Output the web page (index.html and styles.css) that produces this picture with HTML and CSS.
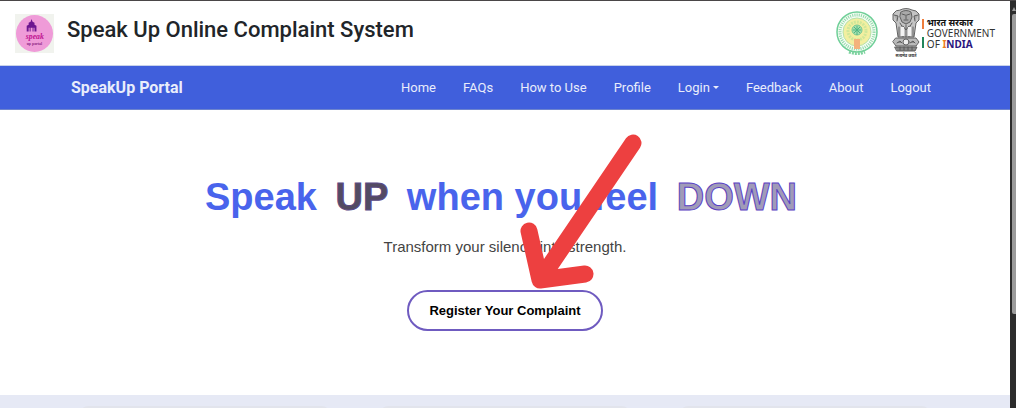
FILE: index.html
```html
<!DOCTYPE html>
<html lang="en">
<head>
<meta charset="utf-8">
<title>Speak Up Online Complaint System</title>
<link rel="stylesheet" href="styles.css">
</head>
<body>
<div class="window">
  <div class="page">
    <header class="masthead">
      <svg class="logo" viewBox="0 0 40 40" role="img" aria-label="Speak Up">
        <rect width="40" height="40" fill="#f1f3ee"/>
        <circle cx="20" cy="20" r="19" fill="#ef9bd8"/>
        <path d="M12 18v-6l2-1v-2l2-1 1-3 1 3 2 1v2l2 1v6h-2v-4h-1v4h-1v-4h-2v4h-1v-4h-1v4z" fill="#6d1590"/>
        <text x="11" y="26" class="logo-word">speak</text>
        <text x="12" y="32" class="logo-sub">up portal</text>
      </svg>
      <h1 class="title">Speak Up Online Complaint System</h1>
      <div class="emblems">
        <svg class="seal" viewBox="0 0 42 46" role="img" aria-label="State seal">
          <circle cx="21" cy="22" r="20" fill="#f4fcf2" stroke="#6fcf98" stroke-width="1.5"/>
          <circle cx="21" cy="22" r="17" fill="none" stroke="#8fd8ab" stroke-width="3" stroke-dasharray="1 1.2"/>
          <circle cx="21" cy="22" r="14" fill="#f3efa0" stroke="#b5e2ac"/>
          <circle cx="21" cy="21" r="9" fill="none" stroke="#cfe79a" stroke-width="3" stroke-dasharray="2 1"/>
          <circle cx="21" cy="20" r="5" fill="#a6dfae" stroke="#74c992"/>
          <path d="M21 16v9M17 20h8M18 17l6 6M24 17l-6 6" stroke="#4fb584"/>
          <path d="M18 29h6v10h-6z" fill="#f3b27c"/>
          <path d="M13 42q8 3 16 0" stroke="#7fd3a0" stroke-width="3" fill="none" stroke-dasharray="2 1"/>
        </svg>
        <svg class="lions" viewBox="0 0 28 50" role="img" aria-label="National emblem">
          <g stroke="#555" stroke-width=".9" stroke-linecap="round" stroke-linejoin="round">
            <path d="M8 2q6-3 12 0l4 1 3 3v6l-3 3-1 7-1 7H6l-1-7-1-7-3-3V6l3-3z" fill="#c4c4c4"/>
            <path d="M9 4q5-3 10 0l1 5-2 5-4 2-4-2-2-5zM2 7l4 1-1 5M26 7l-4 1 1 5" fill="#aaa"/>
            <path d="M10 6l3 1M18 6l-3 1M14 7v4M12 12h4M8 15l3 5v9M20 15l-3 5v9M14 17v12M7 19v9M21 19v9M11 18l3 4 3-4" fill="none"/>
            <path d="M9 19h3v9H9zM16 19h3v9h-3z" fill="#f2f2f2" stroke="none"/>
            <path d="M4 30h20l3 4-3 4H4l-3-4z" fill="#bbb"/>
            <circle cx="14" cy="34" r="3" fill="#eee"/>
            <path d="M5 35l3-2 2 2M18 35l3-2 2 2M3 39h22l-2 4H5zM8 39v3M12 39v3M16 39v3M20 39v3" fill="#888"/>
          </g>
          <text x="14" y="49" class="motto" text-anchor="middle">सत्यमेव जयते</text>
        </svg>
        <span class="tricolor"></span>
        <div class="gov">
          <span class="gov-hi" lang="hi">भारत सरकार</span>
          <span>GOVERNMENT</span>
          <span>OF <b class="india"><span class="saffron">I</span>NDIA</b></span>
        </div>
      </div>
    </header>
    <nav class="navbar">
      <a class="brand" href="#">SpeakUp Portal</a>
      <div class="links">
        <a href="#">Home</a><a href="#">FAQs</a><a href="#">How to Use</a><a href="#">Profile</a><a href="#" class="dropdown">Login</a><a href="#">Feedback</a><a href="#">About</a><a href="#">Logout</a>
      </div>
    </nav>
    <main class="hero">
      <h2 class="slogan">Speak <span class="up">UP</span> when you feel <span class="down">DOWN</span></h2>
      <p class="tagline">Transform your silence into strength.</p>
      <button class="register" type="button">Register Your Complaint</button>
      <svg class="pointer" viewBox="0 0 124 156" aria-hidden="true">
        <path d="M113 9L20 146M9 97L20 146L65 140" />
      </svg>
    </main>
    <section class="cards"><div class="card"></div><div class="card"></div><div class="card"></div></section>
  </div>
  <div class="scrollbar"><span class="arrow"></span><span class="thumb"></span></div>
</div>
</body>
</html>
```
FILE: styles.css
```css
* { box-sizing: border-box; }
body { margin: 0; font-family: Roboto, "Liberation Sans", sans-serif; background: #fff; }
.window { display: flex; height: 100vh; overflow: hidden; border-top: 1px solid #4a4647; }
.page { flex: 1; min-width: 0; }
.masthead { display: flex; align-items: center; height: 65px; padding: 0 15px; border-bottom: 1px solid #c8d2ea; }
.logo { width: 39px; height: 39px; }
.logo-word { font: italic bold 8px "Liberation Serif", serif; fill: #c01290; }
.logo-sub { font: bold 4px "Liberation Serif", serif; fill: #8c2a86; }
.title { margin: 0 auto 6px 13px; font-size: 22px; font-weight: 500; line-height: 28px; color: #212529; }
.emblems { display: flex; align-items: center; }
.seal { width: 42px; height: 46px; margin-right: 14px; }
.lions { width: 28px; height: 50px; }
.motto { font: bold 4px "Noto Sans", "Noto Sans Devanagari", sans-serif; fill: #333; }
.tricolor { width: 2px; height: 29px; margin: 0 3px 0 2px; background: linear-gradient(#ef7d3b 0 10px, #fff 10px 18px, #22855a 18px); }
.gov { display: flex; flex-direction: column; font: 10px/11px "Noto Sans", sans-serif; color: #333; }
.gov-hi { font-size: 9px; font-weight: 700; color: #111; }
.india { color: #2b1680; }
.saffron { color: #ef7d1b; }
.navbar { display: flex; align-items: center; justify-content: space-between; height: 44px; padding: 0 79px 0 71px; background: #405fdc; border-bottom: 1px solid #6d84cd; }
.navbar a { color: #e9edfb; text-decoration: none; }
.navbar .brand { font-size: 16px; font-weight: 700; }
.links { display: flex; gap: 27px; font-size: 13px; }
.dropdown::after { content: ""; display: inline-block; margin-left: 3px; vertical-align: 3px; border: 3px solid transparent; border-top-color: currentColor; border-bottom: 0; }
.hero { position: relative; display: flex; flex-direction: column; align-items: center; padding: 65px 0 64px; font-family: "Liberation Sans", Arial, sans-serif; }
.slogan { margin: 0; font-size: 38px; line-height: 44px; color: #4964ec; white-space: nowrap; }
.up, .down { display: inline-block; margin: 0 8px; -webkit-text-stroke: 1px #5b3fc4; }
.up { color: #534b62; -webkit-text-stroke-color: #5b4a86; }
.down { color: #a09bb8; }
.tagline { margin: 18px 0 33px; font-size: 15px; line-height: 20px; color: #444; }
.register { height: 41px; padding: 0 20px; font: bold 13px "Liberation Sans", Arial, sans-serif; color: #000; background: #fff; border: 2px solid #6f5bc0; border-radius: 21px; }
.pointer { position: absolute; top: 24px; left: calc(50% + 15px); width: 124px; height: 156px; }
.pointer path { fill: none; stroke: #ed4040; stroke-width: 17; stroke-linecap: round; stroke-linejoin: round; }
.cards { display: grid; grid-template-columns: repeat(3, 1fr); gap: 50px; padding: 11px 80px; background: #e6e9f5; }
.card { height: 120px; border-radius: 8px; background: #e2e4ec; }
.scrollbar { display: flex; flex-direction: column; align-items: flex-end; width: 6px; background: #2c2c2c; }
.arrow { margin: 6px 0 3px; border: 2px solid transparent; border-top: 0; border-bottom: 4px solid #999; }
.thumb { width: 4px; height: 300px; border-radius: 2px 0 0 2px; background: #9b9b9b; }
```
